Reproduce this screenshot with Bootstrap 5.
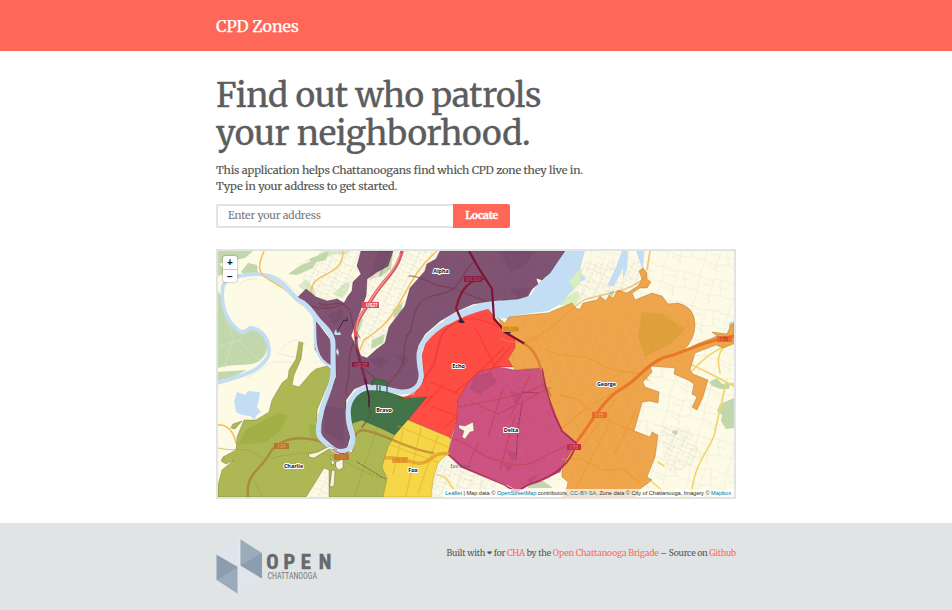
<!DOCTYPE html>
<html lang="en">
<head>
<meta charset="utf-8">
<meta name="viewport" content="width=device-width, initial-scale=1">
<title>CPD Zones</title>
<link rel="stylesheet" href="https://cdn.jsdelivr.net/npm/bootstrap@5.3.0/dist/css/bootstrap.min.css">
<style>
  body { font-family: Merriweather, "DejaVu Serif Condensed", "DejaVu Serif", serif; font-stretch: condensed; color: #555650; background: #fff; font-size: 11px; }
  .wrap { width: 520px; margin: 0 auto; }
  .topbar { height: 51px; background: #ff6859; }
  .brand { color: #fff; font-size: 16px; letter-spacing: 0; line-height: 51px; padding-top: 1px; -webkit-text-stroke: .25px #fff; }
  .headline { font-size: 33.5px; line-height: 38.4px; letter-spacing: -.34px; color: #5c5d5e; font-weight: 400; margin: 24px 0 9px; padding-top: 1px; white-space: nowrap; -webkit-text-stroke: .3px #5c5d5e; }
  .intro { font-size: 11px; line-height: 16px; letter-spacing: -.13px; margin: 0 0 10px; white-space: nowrap; -webkit-text-stroke: .12px #555650; }
  .finder { width: 294px; height: 24px; }
  .finder .form-control { font: inherit; font-size: 10.5px; letter-spacing: -.1px; border: 2px solid #e0e4e4; border-right: 0; border-radius: 2px 0 0 2px; padding: 0 10px; height: 24px; min-height: 0; }
  .finder .form-control::placeholder { color: #777; opacity: 1; }
  .finder .btn { width: 57px; height: 24px; background: #ff6859; border: 0; color: #fff; font-size: 10.5px; font-weight: 700; letter-spacing: -.25px; padding: 0; border-radius: 0 2px 2px 0; -webkit-text-stroke: .3px #fff; }
  .map { height: 250px; margin-top: 21px; border: 2px solid #e0e4e4; overflow: hidden; }
  .map svg { display: block; width: 516px; height: 246px; }
  .zoomer { left: 5px; top: 5px; width: 14px; border-radius: 2px; background: #fff; box-shadow: 0 0 2px rgba(0,0,0,.5); font: bold 10px/13px "Liberation Sans", Arial, sans-serif; color: #111; text-align: center; }
  .zoomer span { display: block; height: 13px; }
  .zoomer span + span { border-top: 1px solid #ccc; }
  .credits { right: 0; bottom: 0; background: rgba(255,255,255,.7); font: 5.7px/8px "Liberation Sans", Arial, sans-serif; letter-spacing: -.056px; padding: 0 3px 0 2px; color: #333; white-space: nowrap; }
  .credits a { color: #0078a8; text-decoration: none; }
  .foot { margin-top: 24px; height: 87px; background: #e0e4e4; }
  .foot p { font-size: 8.5px; line-height: 12px; letter-spacing: -.17px; margin: 24px 0 0; white-space: nowrap; }
  .foot a { color: #ff6859; text-decoration: none; }
  .heart { font-size: 6px; vertical-align: 1px; }
  .logo { margin-top: 15px; }
  .zone { stroke-width: .6; stroke-opacity: .55; }
  .tag { font: bold 5.4px "Open Sans", sans-serif; fill: #111; stroke: #fff; stroke-width: 2px; paint-order: stroke; stroke-linejoin: round; text-anchor: middle; }
  .shield { font: bold 4.5px "Liberation Sans", sans-serif; text-anchor: middle; }
</style>
<script src="https://cdn.jsdelivr.net/npm/bootstrap@5.3.0/dist/js/bootstrap.bundle.min.js"></script>
</head>
<body>
<header class="topbar"><div class="wrap"><span class="brand d-block">CPD Zones</span></div></header>
<main class="wrap">
  <h1 class="headline">Find out who patrols<br>your neighborhood.</h1>
  <p class="intro">This application helps Chattanoogans find which CPD zone they live in.<br>Type in your address to get started.</p>
  <form class="finder d-flex">
    <input class="form-control" type="text" placeholder="Enter your address" aria-label="Address">
    <button class="btn flex-shrink-0" type="button">Locate</button>
  </form>
  <div class="map position-relative">
    <svg viewBox="218 251 516 246" fill="none" stroke-linejoin="round" stroke-linecap="round">
      <defs>
        <pattern id="streets" width="37" height="31" patternUnits="userSpaceOnUse" patternTransform="rotate(14)">
          <path d="M0 6C8 3 12 9 20 6S32 4 37 6M6 0C4 9 9 15 6 31M20 6c2 8-3 12 1 25M0 21c10-4 15 4 25 0s8 1 12 0M28 5c-3 6 4 9 2 15M10 12h9M12 24l10 4M27 12h8" stroke="#e9e6d6" stroke-width=".6"/>
        </pattern>
        <pattern id="blocks" width="14" height="11" patternUnits="userSpaceOnUse" patternTransform="rotate(-20)">
          <path d="M0 3H14M0 8H9M4 0V11M10 3V11" stroke="#000" stroke-opacity=".028" stroke-width=".5"/>
        </pattern>
        <pattern id="dense" width="11" height="9" patternUnits="userSpaceOnUse" patternTransform="rotate(25)">
          <path d="M0 3C4 1 6 5 11 3M3 0C2 4 5 5 3 9M8 3c-2 2 1 4 0 6M0 7h5" stroke="#dfdccb" stroke-width=".55"/>
        </pattern>
      </defs>
      <rect x="218" y="251" width="516" height="246" fill="#fdfbe6"/>
      <path d="M560 251H734V497H430V440H560Z" fill="url(#streets)"/>
      <path d="M296 264L328 251H361L358 270 345 303 325 300 304 286ZM393 251H440L405 306 385 343 361 357 351 336 366 279ZM585 262L640 262 636 288 580 302 570 295ZM662 425l28 3 12 30-30 18-10-20zM326 468L306 497H330ZM446 455l50 28-8 14H431l6-30z" fill="url(#dense)"/>
      <path d="M272 275c17 7 30 18 42 42M257 279c-9 0-15 1-19 8M247 378l25-16 20 0M281 350c10-12 16-12 26-5M277 353l24 6" stroke="#ece9d8" stroke-width="1"/>
      <g fill="#c2d8ac">
        <path d="M218 251h35l-8 7-27 6zM218 262l9 11-9 3zM241 272l7-9 9 2 1 8-12 3zM218 291c5 7 3 14 6 19 3 12 10 19 17 22 7-7 16-3 21 2 8 8 7 21-4 28-12 5-24 1-40 6zM218 372l29-2-12 6-17 5zM288 274l13-9 17-6-5 9-16 7zM309 259l20-8-3 9-15 3zM383 256l10-5-2 18-12 9zM352 330l8-14 3 3-6 18zM372 340l13-6-2 9-12 6zM393 310l10-8-2 10-7 6z"/>
        <path d="M720 404l14-6v30l-8 1-5-8 1-6-5-4zM709 382l8-4 5 6 8-1-1 6-9 0-8-3zM729 323l5-2v8l-5 2zM673 430l5 1-1 4-5-2zM610 291l4 0-1 5-4-1zM528 480l15 1 10 7h-25z"/>
        <path d="M567 286l10-16 5-2-1 14-8 9-8 3zM560 301l17-10 3 5-4 9-16 0z" fill="#d9eebb"/>
        <path d="M298 286l8-7 8 9 2 8-8-2zM333 294l10-10 7-3-2 10-6 7zM318 254l5-3h28l-7 4-9-1-8 3z" fill-opacity=".55"/>
      </g>
      <path d="M219 346l20-5 7-9M224 312l9 26-9 30M239 341l22 21" stroke="#d1e2bf" stroke-width=".8"/>
      <g fill="#c3ddf4">
        <path d="M237 392l8 3 3-4 12 1-1 7-2 8 4 5-5 4-1 4-5-4-8-1-6-3-2-10z"/>
        <path d="M493 301L518 299 531 295 537 285 545 276 552 264 566 251H585L580 269 569 282 574 288 562 303 548 311 525 314 514 316 510 322 505 318 496 319 485 309Z"/>
        <path d="M622 251l-6 16-9 19 7 0 9-18 0 11 4-10 1-18zM636 251l4 11 3 9 1-20zM581 273l5 6-6 3z"/>
      </g>
      <path d="M217 383C230 379 245 376 256 369Q270 360 269 350C268 334 258 328 250 328Q245 334 239 331C226 320 220 304 223 286Q227 276 240 276 263 271 278 280" stroke="#c3ddf4" stroke-width="3.800"/>
      <g stroke="#f5c266" stroke-width="1.6">
        <path d="M264 251C258 265 257 273 268 279S288 291 298 299M343 251C343 267 333 271 323 276S310 287 312 294M217 425c12-1 17 9 19 18M437 251c-19 16-27 33-38 53s-23 28-35 36l-6 14M650 251l-3 19M308 458c8-9 15-11 26-9"/>
        <path d="M692 371c12-13 24-23 42-27M675 359c25 7 42 19 59 27M731 251M734 384l-8-1-12 53c-10 22-20 29-23 61M709 497l-9-3-20 3M658 462l6 4M652 482l12 10M437 475c11 0 12 9 18 17M720 373c-2-11-4-18 6-28" stroke="#f0d667"/>
      </g>
      <!-- patrol zones -->
      <g fill-opacity=".98">
        <path class="zone" fill="#7d5070" stroke="#331027" d="M565 251L558 261 550 273 545 277 542 280 536 278 538 284 532 289 528 296 518 299 493 301 473 304 457 311 440 321 425 334 418 346 419 375 416 386 401 392 385 386 377 385 366 384 354 389 346 400 346 417 350 437 347 448 339 450 327 443 321 433 322 413 329 393 336 377 335 343 322 321 297 298 306 289 316 297 327 301 337 299 344 303 348 296 352 291 353 282 361 274 357 266 361 251H393L388 266 377 272 367 279 366 296 357 319 351 336 361 356 367 358 377 349 385 343 389 327 395 319 405 306 410 288 425 271 427 264 436 259 440 251Z"/>
        <path class="zone" fill="#7d5070" stroke="#331027" d="M316 321L331 341V366L322 361 315 349Z"/>
        <path class="zone" fill="#abb752" stroke="#526016" d="M299 342L303 343 301 359 294 375 292 385 299 387 311 373 316 369 327 366 332 370 331 377 324 393 317 410 317 433 326 447 341 456 352 452 356 437 352 423 362 420 387 430 395 435 388 447 386 454 382 467 387 478 384 497H329L329 470 324 468 318 478 306 497H218V485L222 470 234 460 226 464 221 461 223 457 236 450 237 437 244 420 256 420 269 412 272 400 282 383 288 378 289 370 296 359Z"/>
        <path class="zone" fill="#abb752" stroke="#526016" d="M233 424l9-3-7 8-4-1z"/>
        <path class="zone" fill="#3f7045" stroke="#163f20" d="M352 423L350 407 355 396 366 390 386 391 405 398 427 397 408 420 395 435 385 430 362 420Z"/>
        <path class="zone" fill="#ff4940" stroke="#801c20" d="M453 321L468 312 488 309 495 318 503 328 515 338 515 348 508 359 513 367 498 367 478 372 468 383 458 400 457 420 451 438 408 420 427 397 398 398 414 395 424 378 422 355 426 342 438 330Z"/>
        <path class="zone" fill="#cc507e" stroke="#812048" d="M478 372L498 367 515 370 540 368 548 400 562 432 576 443 562 467 560 472 528 485 518 491 508 485 462 467 448 453 457 420 458 400 468 383Z"/>
        <path class="zone" fill="#f5d544" stroke="#94751b" d="M408 420L451 438 448 453 438 463 433 480 431 497H383L387 478 382 467 388 447 395 435Z"/>
        <path class="zone" fill="#eea348" stroke="#87551d" d="M498 318L505 323 509 317 525 315 548 313 560 308 572 303 577 309 580 309 583 303 597 300 600 296 606 301 609 295 613 298 618 290 627 293 638 286 642 279 639 271 643 268 647 273 647 279 651 282 647 288 640 288 632 293 635 300 652 293 662 296 668 304 678 303Q695 307 695 325 695 340 682 352L697 344 710 339 717 336 712 332 727 334 731 325 734 324V343L723 348 716 345 695 353 690 370 693 374 708 380 703 397 697 410 692 407 697 397 692 394 694 384 688 380 674 374 675 368 650 366 652 372 643 382 645 387 659 392 658 403 650 401 642 402 640 410 634 431 650 437 652 432 658 435 655 457 647 477 652 480 640 489 635 497H563L567 487 568 482 562 477 562 467 576 443 562 432 548 400 540 368 515 370 508 359 515 348 515 338 503 328Z"/>
      </g>
      <!-- shading inside the zones -->
      <path d="M642 312l20 2 23 15-12 13-28 15-7-20z" fill="#dca038" fill-opacity=".8"/>
      <path d="M246 430l32-17 10 3-7 14-15 12-28 3z" fill="#98aa38" fill-opacity=".5"/>
      <path d="M309 424l13 2v14l-12-3z" fill="#98aa38" fill-opacity=".5"/>
      <g fill="#4c2447" fill-opacity=".13"><path d="M378 251l14 0-11 25-12 4zM324 405l21 4-2 35-18-12zM328 315l14-7 1 10-9 7zM499 251l35 0-9 15-14 6zM510 289l18-1 0 7-10 3zM370 360l12-3 7 4-8 8zM395 354l14 4-5 10zM475 375l16-3 6 10-17 12-11-5zM510 390l13 5-8 9zM506 450l12 3-6 9zM503 463l10 3-5 6zM527 479l12-5-9 10z"/></g>
      <path d="M297 298L337 270 350 300 440 320 418 380 345 450 322 430zM440 251H560L530 295 430 320zM422 340L495 310 515 345 560 430 540 480 450 445zM515 320L690 310 690 345 650 370 640 430 650 480H570L575 440zM240 430L325 400 320 440 385 435 380 495H335L330 462 300 490H230z" fill="url(#blocks)"/>
      <!-- roads through the zones -->
      <g stroke="#762e37" stroke-opacity=".5" stroke-width="1.300">
        <path d="M298 299c11 8 26 14 45 5l7 6 3 16 7 12M319 303c8 6 18-2 24 1M409 276c14 0 21 8 32 10l14 3 30 12M475 261c-14 10-13 28-30 32-20 5-29 3-34 38-9 8-5 20-8 31-3 12-10 14-14 22M347 395c-4-8 4-14 2-32 1-13 2-19 9-26M363 368l15 13"/>
      </g>
      <g stroke="#a8672a" stroke-opacity=".55" stroke-width="2.500"><path d="M248 497c-3-25 15-28 23-46q14-16 39-12c17 1 24 15 36 14 9-9 6-22 17-23 22 3 41 19 70 23"/><path d="M218 448c17 4 25-1 34 4s10 7 21 6c23-6 45-8 65 0 17 8 28 17 49 21M255 481l7 16M377 427l-23 70" stroke="#a59a31" stroke-width="1"/></g>
      <g stroke="#ee9125" stroke-opacity=".55" stroke-width="1.300">
        <path d="M500 338c35 18 62-25 84-38 24-8 45-7 62-24M560 430l26-22 52-29M580 450l35-50M546 350c23 11 35 0 57 16 21 10 34 2 45 14M560 395l17 4c15 16 43 27 67 36M614 455l22-45M575 490l35-68M562 459l20 0 20 11 22-1 15 14"/>
        <path d="M452 325c20-14 37-2 54 5M454 393l20-16 30-29M432 407l26 9M430 382l28 12M445 427l10-9M475 327l19 38M423 407l20-22M510 347l-24 29" stroke="#f0322c"/>
        <path d="M450 438c19 3 29 18 43 21s21 9 39 4l34-17M459 407c25-5 45-8 65-14s19-15 27 3M500 470l15-55M530 375l-20 43M470 401l28 13 52-26M488 437l15-49M478 443l-9 20" stroke="#c53c49" stroke-opacity=".5"/>
        <path d="M398 426l50 21M391 445l48 18M403 431l-10 43M421 428l-15 68M438 436l-20 57" stroke="#e7ab24"/>
      </g>
      <path d="M734 336C694 343 680 355 665 357 646 364 637 381 621 389 602 400 590 426 574 445" stroke="#ea7627" stroke-width="3"/>
      <path d="M385 458c21-2 26 7 36 5 12-1 11-12 28-9" stroke="#df9b29" stroke-width="3.500" stroke-opacity=".75"/>
      <path d="M452 325c-16 9-12 24-19 41l-18 26-10 7" stroke="#e53739" stroke-width="2.500" stroke-opacity=".55"/>
      <!-- river between the zones -->
      <path d="M313 314C317 325 313 338 317 350Q320 362 332 367" stroke="#c3ddf4" stroke-width="2.600"/>
      <path d="M270 277C284 282 289 292 298 300 306 303 312 312 319 321 326 328 333 334 333 344V370C334 385 323 400 321 414 316 433 318 437 326 443 333 449 336 453 345 451 355 447 354 438 350 428 347 416 347 405 353 397 361 386 372 387 381 388L400 392C416 393 422 383 421 373 418 358 417 348 427 338 436 327 446 323 455 317" stroke="#c3ddf4" stroke-width="5"/>
      <path d="M448 321Q465 311 485 306L500 304" stroke="#c3ddf4" stroke-width="7"/>
      <path d="M372 385l1-5 5-1 9 3v11M377 385v6M380 386v6" fill="none" stroke="#24583a" stroke-width="1.200"/>
      <path d="M373 380l5-1 9 3v4l-14-2z" fill="#3f7045"/>
      <path d="M331 448q9 9 18 4" stroke="#c2443f" stroke-width="1"/>
      <path d="M402 251c-5 21-18 28-29 46-9 15-20 25-17 41" stroke="#d85761" stroke-width="3.500"/>
      <path d="M400 254c-5 18-19 29-28 44-9 14-17 22-15 33" stroke="#f7a19c" stroke-width="1.200"/>
      <path d="M356 338c1 20 6 28 10 45" stroke="#84204b" stroke-width="2.800" stroke-opacity=".8"/>
      <path d="M365 379l4 18v10" stroke="#4a1740" stroke-width="1.500"/>
      <path d="M369 407c3 9-2 14-7 20" stroke="#5e5a2f" stroke-width="1.800" stroke-opacity=".6"/>
      <path d="M542 369c3 19 10 42 20 62l14 12q-3 15-15 25-10 10-33 17l-10 6q-5 0-13-6l-43-18-13-12" stroke="#a72158" stroke-width="1.800" stroke-opacity=".85"/>
      <path d="M469 251l9 16 14 22 2 30 14 15 17 10" stroke="#7c1333" stroke-width="2.200"/>
      <path d="M483 279c-19 1-24 18-27 29l6 14" stroke="#871a29" stroke-width="2.200"/>
      <path d="M525 344c10 6 14 17 16 25" stroke="#df7f30" stroke-width="2.500"/>
      <path d="M458 322l3-4 4 5-4 0zM503 332l5-5 3 6-5 1z" fill="#351c3e"/>
      <path d="M338 330l6-10 3 1 0-3" stroke="#331a3c" stroke-width=".9"/>
      <path d="M522 392l16 1M522 404l-4 25-2 30M357 462l28 17" stroke="#552b3e" stroke-width=".5" stroke-dasharray="3 1.5"/>
      <!-- enclaves and ponds -->
      <g fill="#fbf5df" stroke="#705b42" stroke-width=".4"><path d="M459 425l6 1 8-4 1 9-4 1-5 7-3-2 2-6-5-3zM309 454l9-2 12-6 7 4-8-1-15 9-5-1zM336 462l7-3 0 9-4 2-3-3zM331 459l4 4-3 2zM332 470l3 1-1 15-4 1z"/></g>
      <path d="M336 329l1 4 3-1 1 3-6 0-1-2zM337 348l2 4-1 4-2-4z" fill="#c3ddf4"/>
      <g>
        <path d="M362 302h17v6h-17z" fill="#df4d5b"/><path d="M352 362h17v5h-17zM464 276h18v6h-18z" fill="#84204b"/>
        <path d="M274 443h15v6h-15zM334 454h15v6h-15z" fill="#b67731"/><path d="M502 326h17v6h-17zM392 457h16v6h-16z" fill="#e99a2a"/><path d="M592 412h15v6h-15zM717 336h15v6h-15z" fill="#e46c2e"/><path d="M567 444h14v6h-14z" fill="#c2304b"/>
      </g>
      <g class="shield"><text x="372" y="307" fill="#fff">US27</text><text x="361" y="366.500" fill="#bf5868">US 27</text><text x="281.500" y="448" fill="#e0a35b">I 24</text><text x="341" y="459" fill="#d88540">I 24</text><text x="599.500" y="417" fill="#f5a15b">I 75</text><text x="574" y="449" fill="#e86d66">I 75</text><text x="473" y="281" fill="#b83c56">SR 319</text><text x="510.500" y="331" fill="#c77f1e">SR 319</text><text x="400" y="462" fill="#c98d22">US 27</text><text x="724" y="341" fill="#bc252f">I 75</text></g>
      <text x="460.500" y="468" text-anchor="middle" font-family="Open Sans, sans-serif" font-size="5.700" fill="#82545b">East Ridge</text>
      <g class="tag"><text x="441" y="273">Alpha</text><text x="458.500" y="368">Echo</text><text x="384" y="412">Bravo</text><text x="606.500" y="385.500">George</text><text x="511" y="431.500">Delta</text><text x="293.500" y="468">Charlie</text><text x="413" y="472">Fox</text></g>
    </svg>
    <div class="zoomer position-absolute"><span>+</span><span>−</span></div>
    <div class="credits position-absolute"><a href="#">Leaflet</a> | Map data © <a href="#">OpenStreetMap</a> contributors, <a href="#">CC-BY-SA</a>, Zone data © City of Chattanooga, Imagery © <a href="#">Mapbox</a></div>
  </div>
</main>
<footer class="foot">
  <div class="wrap d-flex justify-content-between">
    <svg class="logo" width="116" height="57" viewBox="216 538 116 57" role="img" aria-label="Open Chattanooga">
      <path d="M216.700 554L239.300 539V566L262 579 239.300 594 216.700 580Z" fill="#dfe5ec"/>
      <path d="M216.700 554.300L238 566.700V594L216.700 580Z" fill="#9cabbb"/><path d="M216.700 580L238 567V566.700L216.700 554.300Z" fill="#8b9dae"/>
      <path d="M240 539L262 553V579L240 565.700Z" fill="#9cabbb"/><path d="M262 553V579L240 565.700Z" fill="#8b9dae"/>
      <path d="M216.700 554.300L238 566.700V594M240 539V565.700L262 579" fill="none" stroke="#f3f3ee" stroke-width=".7"/>
      <text x="266.300 283.500 300.800 318.700" y="569.300" font-family="Roboto, sans-serif" font-weight="700" font-size="20.500" fill="#66696d" stroke="#66696d" stroke-width=".5">OPEN</text>
      <text x="267.500" y="578.700" textLength="49.500" lengthAdjust="spacingAndGlyphs" font-family="Roboto, sans-serif" font-size="9" fill="#75787b">CHATTANOOGA</text>
    </svg>
    <p>Built with <span class="heart">❤</span> for <a href="#">CHA</a> by the <a href="#">Open Chattanooga Brigade</a> – Source on <a href="#">Github</a></p>
  </div>
</footer>
</body>
</html>
